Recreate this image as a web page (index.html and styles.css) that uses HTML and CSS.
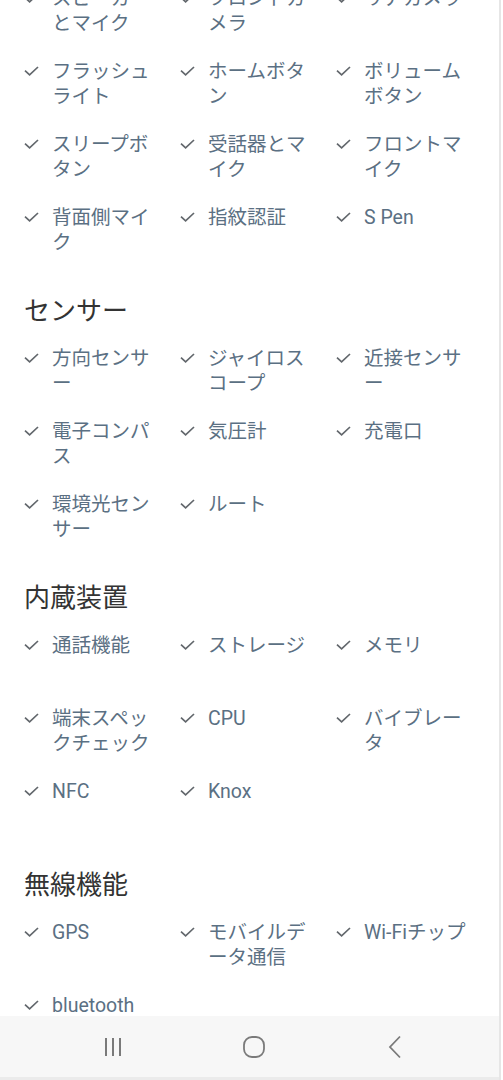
FILE: index.html
```html
<!DOCTYPE html>
<html lang="ja">
<head>
  <meta charset="UTF-8">
  <meta name="viewport" content="width=device-width, initial-scale=1.0">
  <title>端末機能</title>
  <link rel="stylesheet" href="styles.css">
</head>
<body>
  <div class="page">
    <ul class="features first">
      <li><span class="check"></span><span class="label">スピーカーとマイク</span></li>
      <li><span class="check"></span><span class="label">フロントカメラ</span></li>
      <li><span class="check"></span><span class="label">リアカメラ</span></li>
      <li><span class="check"></span><span class="label">フラッシュライト</span></li>
      <li><span class="check"></span><span class="label">ホームボタン</span></li>
      <li><span class="check"></span><span class="label">ボリュームボタン</span></li>
      <li><span class="check"></span><span class="label">スリープボタン</span></li>
      <li><span class="check"></span><span class="label">受話器とマイク</span></li>
      <li><span class="check"></span><span class="label">フロントマイク</span></li>
      <li><span class="check"></span><span class="label">背面側マイク</span></li>
      <li><span class="check"></span><span class="label">指紋認証</span></li>
      <li><span class="check"></span><span class="label">S Pen</span></li>
    </ul>

    <h2>センサー</h2>
    <ul class="features">
      <li><span class="check"></span><span class="label">方向センサー</span></li>
      <li><span class="check"></span><span class="label">ジャイロスコープ</span></li>
      <li><span class="check"></span><span class="label">近接センサー</span></li>
      <li><span class="check"></span><span class="label">電子コンパス</span></li>
      <li><span class="check"></span><span class="label">気圧計</span></li>
      <li><span class="check"></span><span class="label">充電口</span></li>
      <li><span class="check"></span><span class="label">環境光センサー</span></li>
      <li><span class="check"></span><span class="label">ルート</span></li>
    </ul>

    <h2>内蔵装置</h2>
    <ul class="features">
      <li><span class="check"></span><span class="label">通話機能</span></li>
      <li><span class="check"></span><span class="label">ストレージ</span></li>
      <li><span class="check"></span><span class="label">メモリ</span></li>
      <li><span class="check"></span><span class="label">端末スペックチェック</span></li>
      <li><span class="check"></span><span class="label">CPU</span></li>
      <li><span class="check"></span><span class="label">バイブレータ</span></li>
      <li><span class="check"></span><span class="label">NFC</span></li>
      <li><span class="check"></span><span class="label">Knox</span></li>
    </ul>

    <h2>無線機能</h2>
    <ul class="features">
      <li><span class="check"></span><span class="label">GPS</span></li>
      <li><span class="check"></span><span class="label">モバイルデータ通信</span></li>
      <li><span class="check"></span><span class="label">Wi-Fiチップ</span></li>
      <li><span class="check"></span><span class="label">bluetooth</span></li>
    </ul>
  </div>

  <div class="navbar">
    <svg class="nav-icon" width="20" height="22" viewBox="0 0 20 22">
      <path d="M3 2v18M10 2v18M17 2v18" stroke="#7a7a7a" stroke-width="2" fill="none"/>
    </svg>
    <svg class="nav-icon" width="24" height="24" viewBox="0 0 24 24">
      <rect x="2" y="2" width="20" height="20" rx="8" stroke="#7a7a7a" stroke-width="1.8" fill="none"/>
    </svg>
    <svg class="nav-icon" width="16" height="24" viewBox="0 0 16 24">
      <path d="M13 1.5L3 12l10 10.5" stroke="#7a7a7a" stroke-width="1.8" fill="none"/>
    </svg>
  </div>

  <script>
    // same check mark for every item
    const tick = '<svg width="15" height="10" viewBox="0 0 15 10"><path d="M1 4.6l4.6 4.2L14 1" stroke="#62676c" stroke-width="1.7" fill="none"/></svg>';
    document.querySelectorAll(".check").forEach(el => el.innerHTML = tick);
  </script>
</body>
</html>
```

FILE: styles.css
```css
body {
  margin: 0;
  padding: 0;
  background: #ffffff;
  font-family: Roboto, "Noto Sans CJK JP", sans-serif;
  overflow: hidden;
}
.page {
  padding: 0 0 0 24px;
  margin-top: -14px;
  border-right: 2px solid #e6e6e6;
  margin-right: 2px;
  min-height: 1100px;
}
h2 {
  margin: 39px 0 18px;
  font-size: 26px;
  line-height: 34px;
  font-weight: 400;
  color: #333333;
}
.features {
  list-style: none;
  margin: 0;
  padding: 0;
  display: grid;
  grid-template-columns: 156px 156px 156px;
  row-gap: 23px;
}
.features li {
  display: flex;
  align-items: flex-start;
  min-height: 50px;
}
.check {
  width: 28px;
  flex-shrink: 0;
  padding-top: 7px;
  line-height: 0;
}
.label {
  width: 108px;
  font-size: 19.5px;
  line-height: 25px;
  color: #5b7083;
  word-break: break-all;
}
.navbar {
  position: fixed;
  left: 0;
  right: 4px;
  bottom: 0;
  height: 61px;
  background: #f7f7f7;
  border-bottom: 3px solid #ebebeb;
  display: grid;
  grid-template-columns: 141px 141px 141px;
  justify-items: center;
  align-items: center;
  padding-left: 42px;
}
.nav-icon {
  display: block;
}
```
